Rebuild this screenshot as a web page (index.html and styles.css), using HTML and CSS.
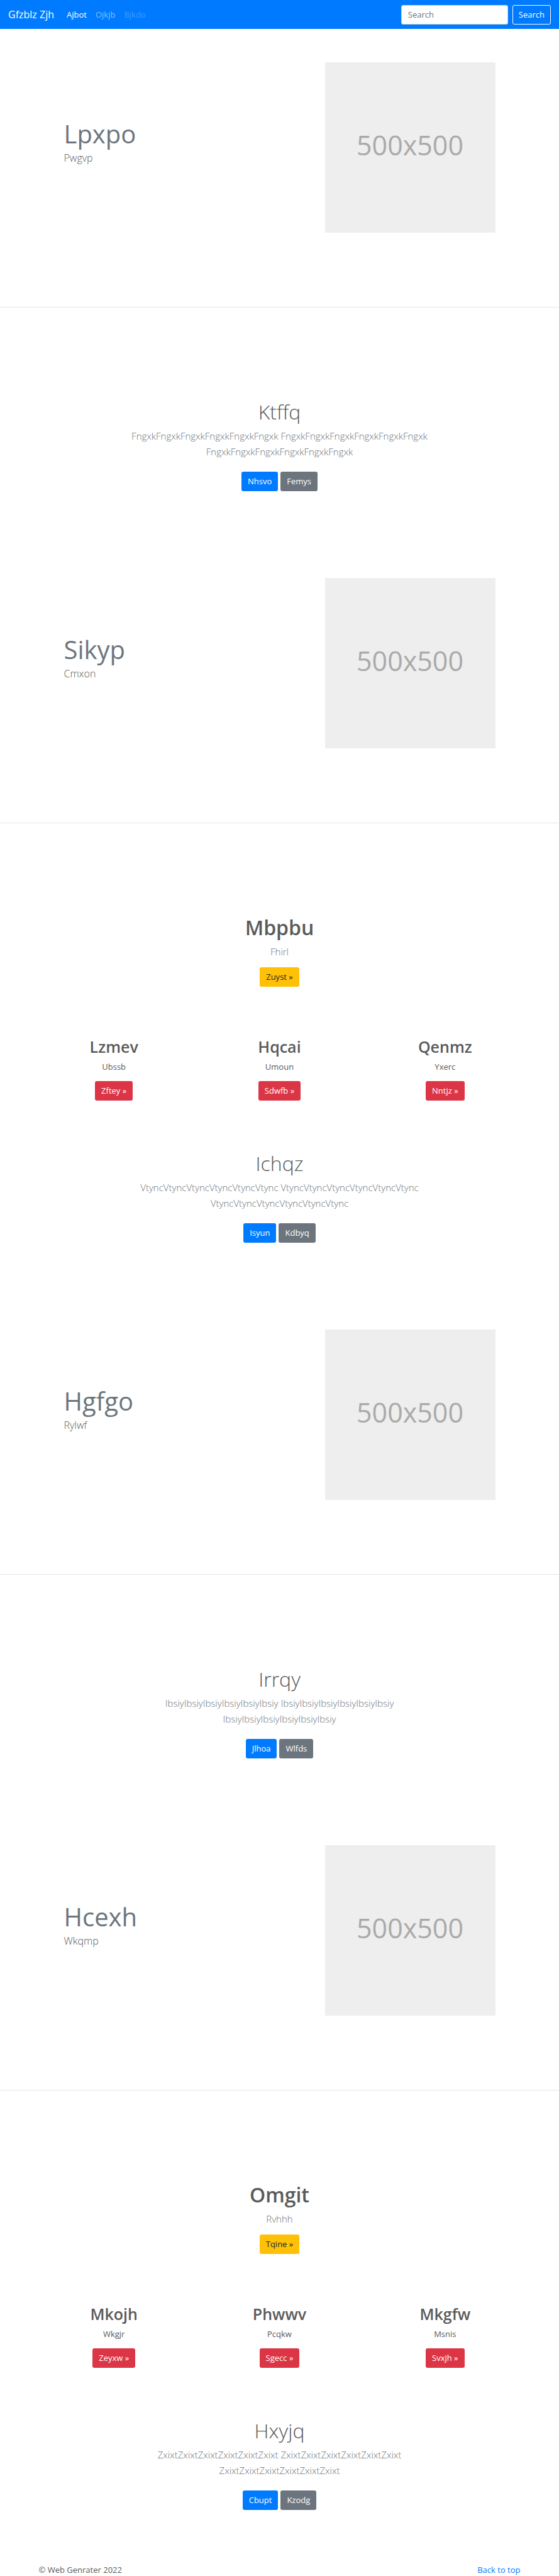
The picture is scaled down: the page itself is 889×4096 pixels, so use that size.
FILE: index.html
```html
<!DOCTYPE html>
<html lang="en">
<head>
<meta charset="utf-8">
<meta name="viewport" content="width=device-width, initial-scale=1">
<title>Gfzblz Zjh</title>
<link rel="stylesheet" href="styles.css">
</head>
<body id="top">
<nav class="navbar">
  <a class="brand" href="#">Gfzblz Zjh</a>
  <a class="nav-link active" href="#">Ajbot</a>
  <a class="nav-link" href="#">Ojkjb</a>
  <a class="nav-link disabled" href="#">Bjkdo</a>
  <form class="search">
    <input class="search-input" type="search" placeholder="Search" aria-label="Search">
    <button class="btn btn-outline" type="button">Search</button>
  </form>
</nav>
<main>
  <section class="container feature">
    <div class="feature-text">
      <h2 class="feature-title">Lpxpo</h2>
      <p class="feature-lead">Pwgvp</p>
    </div>
    <div class="placeholder" role="img" aria-label="500x500">500x500</div>
  </section>
  <hr class="divider">
  <section class="container hero spaced">
    <h1 class="title light">Ktffq</h1>
    <p class="lead">FngxkFngxkFngxkFngxkFngxkFngxk FngxkFngxkFngxkFngxkFngxkFngxk FngxkFngxkFngxkFngxkFngxkFngxk</p>
    <div class="actions"><a class="btn btn-primary" href="#">Nhsvo</a><a class="btn btn-secondary" href="#">Femys</a></div>
  </section>
  <section class="container feature after-hero">
    <div class="feature-text">
      <h2 class="feature-title">Sikyp</h2>
      <p class="feature-lead">Cmxon</p>
    </div>
    <div class="placeholder" role="img" aria-label="500x500">500x500</div>
  </section>
  <hr class="divider">
  <section class="container intro spaced">
    <h1 class="title">Mbpbu</h1>
    <p class="lead">Fhirl</p>
    <a class="btn btn-warning" href="#">Zuyst »</a>
  </section>
  <section class="container cards">
    <article class="card"><h2 class="card-title">Lzmev</h2><p class="card-text">Ubssb</p><a class="btn btn-danger" href="#">Zftey »</a></article>
    <article class="card"><h2 class="card-title">Hqcai</h2><p class="card-text">Umoun</p><a class="btn btn-danger" href="#">Sdwfb »</a></article>
    <article class="card"><h2 class="card-title">Qenmz</h2><p class="card-text">Yxerc</p><a class="btn btn-danger" href="#">Nntjz »</a></article>
  </section>
  <section class="container hero">
    <h1 class="title light">Ichqz</h1>
    <p class="lead">VtyncVtyncVtyncVtyncVtyncVtync VtyncVtyncVtyncVtyncVtyncVtync VtyncVtyncVtyncVtyncVtyncVtync</p>
    <div class="actions"><a class="btn btn-primary" href="#">Isyun</a><a class="btn btn-secondary" href="#">Kdbyq</a></div>
  </section>
  <section class="container feature after-hero">
    <div class="feature-text">
      <h2 class="feature-title">Hgfgo</h2>
      <p class="feature-lead">Rylwf</p>
    </div>
    <div class="placeholder" role="img" aria-label="500x500">500x500</div>
  </section>
  <hr class="divider">
  <section class="container hero spaced">
    <h1 class="title light">Irrqy</h1>
    <p class="lead">IbsiyIbsiyIbsiyIbsiyIbsiyIbsiy IbsiyIbsiyIbsiyIbsiyIbsiyIbsiy IbsiyIbsiyIbsiyIbsiyIbsiyIbsiy</p>
    <div class="actions"><a class="btn btn-primary" href="#">Jlhoa</a><a class="btn btn-secondary" href="#">Wlfds</a></div>
  </section>
  <section class="container feature after-hero">
    <div class="feature-text">
      <h2 class="feature-title">Hcexh</h2>
      <p class="feature-lead">Wkqmp</p>
    </div>
    <div class="placeholder" role="img" aria-label="500x500">500x500</div>
  </section>
  <hr class="divider">
  <section class="container intro spaced">
    <h1 class="title">Omgit</h1>
    <p class="lead">Rvhhh</p>
    <a class="btn btn-warning" href="#">Tqine »</a>
  </section>
  <section class="container cards">
    <article class="card"><h2 class="card-title">Mkojh</h2><p class="card-text">Wkgjr</p><a class="btn btn-danger" href="#">Zeyxw »</a></article>
    <article class="card"><h2 class="card-title">Phwwv</h2><p class="card-text">Pcqkw</p><a class="btn btn-danger" href="#">Sgecc »</a></article>
    <article class="card"><h2 class="card-title">Mkgfw</h2><p class="card-text">Msnis</p><a class="btn btn-danger" href="#">Svxjh »</a></article>
  </section>
  <section class="container hero">
    <h1 class="title light">Hxyjq</h1>
    <p class="lead">ZxixtZxixtZxixtZxixtZxixtZxixt ZxixtZxixtZxixtZxixtZxixtZxixt ZxixtZxixtZxixtZxixtZxixtZxixt</p>
    <div class="actions"><a class="btn btn-primary" href="#">Cbupt</a><a class="btn btn-secondary" href="#">Kzodg</a></div>
  </section>
</main>
<footer class="container footer">
  <span>© Web Genrater 2022</span>
  <a class="footer-link" href="#top">Back to top</a>
</footer>
</body>
</html>
```
FILE: styles.css
```css
* {
  box-sizing: border-box;
}

body {
  margin: 0;
  font-family: "Segoe UI", "Open Sans", "Noto Sans", sans-serif;
  font-size: 13px;
  line-height: 20px;
  color: #5a5a5a;
  background: #fff;
}

h1,
h2,
p {
  margin: 0;
}

a {
  text-decoration: none;
}

.container {
  max-width: 790px;
  margin: 0 auto;
  padding: 0 12px;
}

/* Top bar */
.navbar {
  display: flex;
  align-items: center;
  height: 46px;
  padding: 0 13px;
  background: #007bff;
}

.brand {
  margin-right: 13px;
  font-size: 16px;
  color: #fff;
}

.nav-link {
  padding: 0 7px;
  color: rgba(255, 255, 255, 0.5);
}

.nav-link.active {
  color: #fff;
}

.nav-link.disabled {
  color: rgba(255, 255, 255, 0.25);
}

.search {
  display: flex;
  gap: 7px;
  margin-left: auto;
}

.search-input {
  width: 170px;
  height: 31px;
  padding: 0 10px;
  font: inherit;
  color: #495057;
  background: #fff;
  border: 1px solid #ced4da;
  border-radius: 3px;
}

.search-input::placeholder {
  color: #6c757d;
  opacity: 1;
}

/* Buttons */
.btn {
  display: inline-block;
  height: 31px;
  padding: 0 9px;
  font: inherit;
  line-height: 29px;
  text-align: center;
  color: #fff;
  border: 1px solid transparent;
  border-radius: 3px;
}

.btn-outline {
  background: transparent;
  border-color: #f8f9fa;
}

.btn-primary {
  background: #007bff;
}

.btn-secondary {
  background: #6c757d;
}

.btn-warning {
  color: #212529;
  background: #ffc107;
}

.btn-danger {
  background: #dc3545;
}

/* Text beside a square picture */
.feature {
  display: flex;
  align-items: center;
  justify-content: space-between;
  padding: 53px 52px 118px;
}

.feature.after-hero {
  padding-top: 138px;
}

.feature-text {
  padding-bottom: 18px;
}

.feature-title {
  margin-bottom: 2px;
  font-size: 40px;
  font-weight: 400;
  line-height: 48px;
  color: #6c757d;
}

.feature-lead {
  font-size: 16px;
  font-weight: 300;
  line-height: 24px;
}

.placeholder {
  display: grid;
  place-items: center;
  flex: none;
  width: 271px;
  aspect-ratio: 1;
  padding-bottom: 8px;
  font-size: 43px;
  color: #aaa;
  background: #eee;
}

.divider {
  height: 1px;
  margin: 0;
  border: 0;
  background: #e5e5e5;
}

/* Centred blocks */
.hero,
.intro {
  display: flex;
  flex-direction: column;
  align-items: center;
  text-align: center;
}

.hero {
  max-width: 540px;
}

.spaced {
  padding-top: 146px;
}

.title {
  margin-bottom: 6px;
  font-size: 32px;
  font-weight: 600;
  line-height: 40px;
}

.title.light {
  font-weight: 300;
}

.lead {
  margin-bottom: 12px;
  font-size: 15px;
  font-weight: 300;
  line-height: 25px;
  color: #6c757d;
}

.hero .lead {
  margin-bottom: 19px;
}

.actions {
  display: flex;
  gap: 4px;
}

.cards {
  display: grid;
  grid-template-columns: repeat(3, 1fr);
  padding: 79px 0 80px;
}

.card {
  text-align: center;
}

.card-title {
  margin-bottom: 6px;
  font-size: 25px;
  font-weight: 600;
  line-height: 32px;
}

.card-text {
  margin-bottom: 13px;
}

.card .btn {
  display: block;
  width: fit-content;
  margin: 0 auto;
}

.footer {
  display: flex;
  justify-content: space-between;
  padding-top: 85px;
}

.footer-link {
  color: #007bff;
}
```
